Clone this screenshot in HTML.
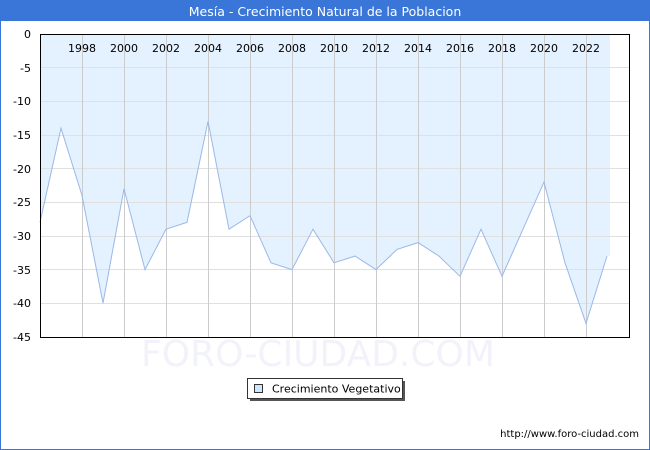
<!DOCTYPE html>
<html><head><meta charset="utf-8"><style>
html,body{margin:0;padding:0;background:#fff}
body{width:650px;height:450px;position:relative;overflow:hidden;font-family:"DejaVu Sans","Liberation Sans",sans-serif}
</style></head><body>
<svg width="650" height="450" xmlns="http://www.w3.org/2000/svg" style="position:absolute;left:0;top:0">
<rect x="0.5" y="0.5" width="649" height="449" fill="#fff" stroke="#3a75d8"/>
<rect x="0" y="0" width="650" height="21" fill="#3a75d8"/>
<text x="325" y="16" font-size="12.5" fill="#fff" text-anchor="middle">Mesía - Crecimiento Natural de la Poblacion</text>
<text x="318" y="366" font-size="36" fill="#f2f2fb" text-anchor="middle">FORO-CIUDAD.COM</text>
<polygon fill="#e4f1fe" points="40,34 40,222.4 61,128.2 82,195.5 103,303.2 124,188.8 145,269.6 166,229.2 187,222.4 208,121.5 229,229.2 250,215.7 271,262.8 292,269.6 313,229.2 334,262.8 355,256.1 376,269.6 397,249.4 418,242.6 439,256.1 460,276.3 481,229.2 502,276.3 523,229.2 544,182.1 565,262.8 586,323.4 607,256.1 610,256.1 610,34"/>
<g stroke="#e0e0e0">
<line x1="40" y1="67.5" x2="630" y2="67.5"/><line x1="40" y1="101.5" x2="630" y2="101.5"/><line x1="40" y1="135.5" x2="630" y2="135.5"/><line x1="40" y1="168.5" x2="630" y2="168.5"/><line x1="40" y1="202.5" x2="630" y2="202.5"/><line x1="40" y1="236.5" x2="630" y2="236.5"/><line x1="40" y1="269.5" x2="630" y2="269.5"/><line x1="40" y1="303.5" x2="630" y2="303.5"/>
</g>
<g stroke="#cccccc">
<line x1="82.5" y1="34" x2="82.5" y2="338"/><line x1="124.5" y1="34" x2="124.5" y2="338"/><line x1="166.5" y1="34" x2="166.5" y2="338"/><line x1="208.5" y1="34" x2="208.5" y2="338"/><line x1="250.5" y1="34" x2="250.5" y2="338"/><line x1="292.5" y1="34" x2="292.5" y2="338"/><line x1="334.5" y1="34" x2="334.5" y2="338"/><line x1="376.5" y1="34" x2="376.5" y2="338"/><line x1="418.5" y1="34" x2="418.5" y2="338"/><line x1="460.5" y1="34" x2="460.5" y2="338"/><line x1="502.5" y1="34" x2="502.5" y2="338"/><line x1="544.5" y1="34" x2="544.5" y2="338"/><line x1="586.5" y1="34" x2="586.5" y2="338"/>
</g>
<polyline fill="none" stroke="#9ab8e8" stroke-width="1" points="40,222.4 61,128.2 82,195.5 103,303.2 124,188.8 145,269.6 166,229.2 187,222.4 208,121.5 229,229.2 250,215.7 271,262.8 292,269.6 313,229.2 334,262.8 355,256.1 376,269.6 397,249.4 418,242.6 439,256.1 460,276.3 481,229.2 502,276.3 523,229.2 544,182.1 565,262.8 586,323.4 607,256.1"/>
<rect x="40.5" y="34.5" width="589" height="303" fill="none" stroke="#000"/>
<g font-size="11" fill="#000" text-anchor="middle">
<text x="82" y="52">1998</text><text x="124" y="52">2000</text><text x="166" y="52">2002</text><text x="208" y="52">2004</text><text x="250" y="52">2006</text><text x="292" y="52">2008</text><text x="334" y="52">2010</text><text x="376" y="52">2012</text><text x="418" y="52">2014</text><text x="460" y="52">2016</text><text x="502" y="52">2018</text><text x="544" y="52">2020</text><text x="586" y="52">2022</text>
</g>
<g font-size="11" fill="#000" text-anchor="end">
<text x="31" y="38">0</text><text x="31" y="72">-5</text><text x="31" y="105">-10</text><text x="31" y="139">-15</text><text x="31" y="173">-20</text><text x="31" y="206">-25</text><text x="31" y="240">-30</text><text x="31" y="274">-35</text><text x="31" y="307">-40</text><text x="31" y="341">-45</text>
</g>
<rect x="250" y="381" width="155" height="20" fill="#555"/>
<rect x="247.5" y="378.5" width="155" height="20" fill="#fff" stroke="#333"/>
<rect x="254.5" y="384.5" width="8" height="8" fill="#cfe6fc" stroke="#333"/>
<text x="272" y="392.5" font-size="11" fill="#000">Crecimiento Vegetativo</text>
<text x="639" y="437" font-size="10" fill="#000" text-anchor="end">http://www.foro-ciudad.com</text>
</svg>
</body></html>
